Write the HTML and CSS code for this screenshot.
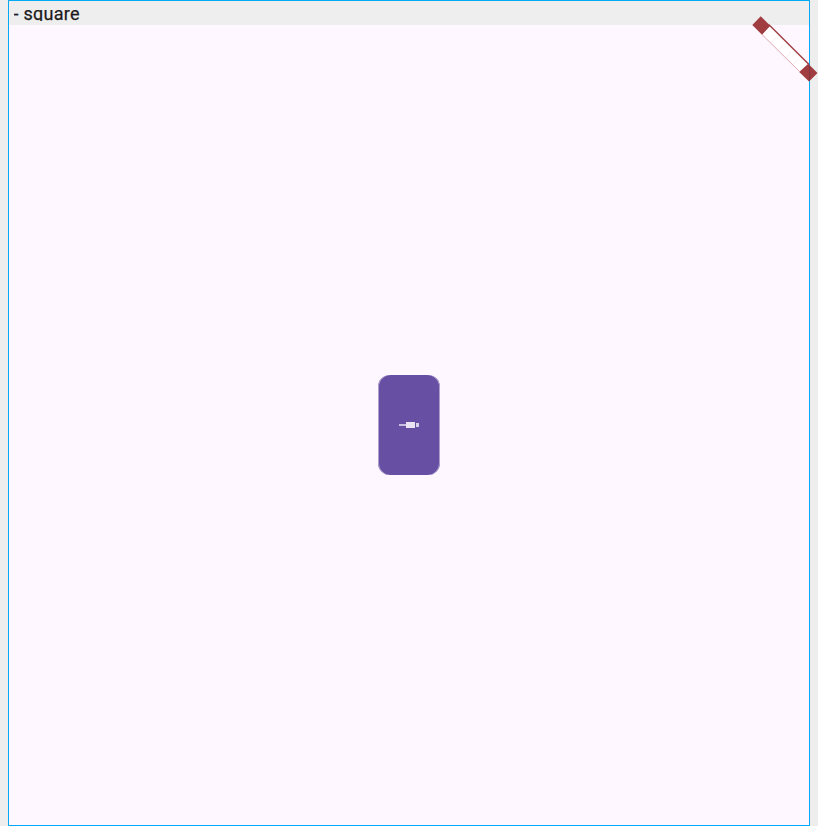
FILE: index.html
```html
<!DOCTYPE html>
<html lang="en">
<head>
<meta charset="utf-8">
<title>square</title>
<link rel="stylesheet" href="styles.css">
</head>
<body>
<main class="frame">
  <header class="label">- square</header>
  <section class="canvas">
    <button class="tile" aria-label="Tile">
      <svg class="glyph" width="22" height="8" viewBox="0 0 22 8" shape-rendering="crispEdges">
        <path d="M1 3h7v2H1z" fill="#c9bfde"/>
        <path d="M8 1h9v6H8z" fill="#e9e3f3"/>
        <path d="M18 2h3v4h-3z" fill="#d8cfe8"/>
      </svg>
    </button>
  </section>
</main>
<svg class="ribbon" width="68" height="70" viewBox="750 14 68 70">
  <path d="M770.5 26L808.5 64L799.5 71.5L762 34.5z" fill="#fff"/>
  <path d="M769 24.8L809 64.6" stroke="#a03d40" stroke-width="1.4"/>
  <path d="M762 34.5L799.5 71.5" stroke="#d6a0a6" stroke-width=".9"/>
  <path d="M776 38l-7 7M783.5 45l-7 7M791 52.5l-7 7M798 59.5l-7 7" stroke="#f3e2e4" stroke-width=".6" fill="none"/>
  <path d="M760.7 16.2L770.3 25.8L762 34.8L752.3 25.1zM808.2 63.7L817.5 73L809 81.5L799.2 71.9z" fill="#a03d40"/>
  <path d="M809.5 65v16" stroke="#5b2a4a" stroke-opacity=".4"/>
</svg>
</body>
</html>
```
FILE: styles.css
```css
* {
  box-sizing: border-box;
}

body {
  margin: 0;
  height: 826px;
  overflow: hidden;
  display: flex;
  justify-content: center;
  background: #eee;
  font-family: Roboto, sans-serif;
}

.frame {
  width: 802px;
  height: 826px;
  display: flex;
  flex-direction: column;
  border: 1px solid #03a9f4;
  background: #eee;
}

.label {
  height: 20px;
  margin: 0 4px 4px 4.5px;
  overflow: hidden;
  color: #1d1b20;
  font-size: 18px;
  line-height: 26px;
  letter-spacing: 0.28px;
  -webkit-text-stroke: 0.25px #1d1b20;
}

.canvas {
  flex: 1;
  display: grid;
  place-items: center;
  background: #fef7ff;
}

.tile {
  width: 62px;
  height: 100px;
  display: grid;
  place-items: center;
  padding: 0;
  border: 0;
  border-radius: 12px;
  background: #6750a4;
  box-shadow: inset 1px 0 #ad9fce, inset -1px 0 #ad9fce;
}

.glyph {
  display: block;
}

.ribbon {
  position: absolute;
  top: 14px;
  left: 750px;
}
```
